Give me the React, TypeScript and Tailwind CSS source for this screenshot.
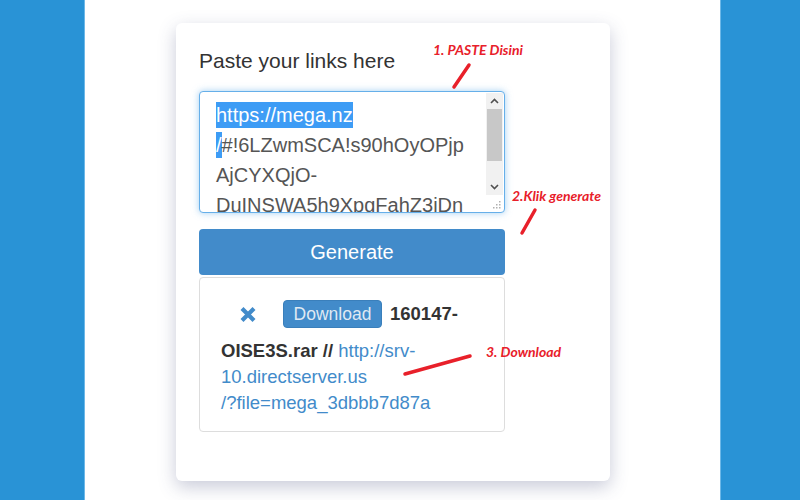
import React from "react";

const Scrollbar = () => (
  <div className="absolute right-[1px] top-[1px] bottom-[1px] w-[17px] flex flex-col">
    <div className="flex-1 bg-[#f1f1f1] flex flex-col">
      <div className="h-[16px] flex items-center justify-center">
        <svg width="9" height="6" viewBox="0 0 9 6">
          <path d="M1 5 L4.5 1.5 L8 5" fill="none" stroke="#505050" strokeWidth="1.6" />
        </svg>
      </div>
      <div className="mx-[1px] h-[52px] bg-[#c8c8c8]" />
      <div className="flex-1" />
      <div className="h-[16px] flex items-center justify-center">
        <svg width="9" height="6" viewBox="0 0 9 6">
          <path d="M1 1 L4.5 4.5 L8 1" fill="none" stroke="#505050" strokeWidth="1.6" />
        </svg>
      </div>
    </div>
    <div className="h-[16px] bg-white flex items-end justify-end pr-[2px] pb-[2px]">
      <svg width="8" height="8" viewBox="0 0 8 8">
        <g fill="#b0b0b0">
          <rect x="6" y="0" width="1.5" height="1.5" />
          <rect x="3" y="3" width="1.5" height="1.5" />
          <rect x="6" y="3" width="1.5" height="1.5" />
          <rect x="0" y="6" width="1.5" height="1.5" />
          <rect x="3" y="6" width="1.5" height="1.5" />
          <rect x="6" y="6" width="1.5" height="1.5" />
        </g>
      </svg>
    </div>
  </div>
);

const noteFont = { fontFamily: 'Lato, "Open Sans", sans-serif' };

export default function App() {
  return (
    <div
      className="relative w-[800px] h-[500px] flex overflow-hidden bg-white text-[#333]"
      style={{ fontFamily: '"Liberation Sans", Arial, sans-serif' }}
    >
      <div className="w-[85px] bg-[#2993d6] border-r border-[#6db8e8]" />
      <div className="flex-1 bg-white pl-[91px] pt-[23px]">
        <div className="w-[434px] h-[458px] bg-white rounded-[6px] shadow-[0_6px_18px_rgba(60,70,120,0.28)] pl-[23px] pt-[26px]">
          <div className="w-[306px]">
            <h1 className="text-[21px] leading-[24px] font-normal text-[#333]">Paste your links here</h1>
            <div className="relative mt-[18px] h-[122px] rounded-[4px] border border-[#66afe9] shadow-[0_0_7px_rgba(102,175,233,0.6)] bg-white overflow-hidden">
              <div className="pl-[16px] pt-[8px] text-[20px] leading-[30px] text-[#555] whitespace-nowrap">
                <div>
                  <span className="bg-[#3d9cf5] text-white py-[2px]">https://mega.nz</span>
                </div>
                <div>
                  <span className="bg-[#3d9cf5] text-white py-[2px]">/</span>#!6LZwmSCA!s90hOyOPjp
                </div>
                <div>AjCYXQjO-</div>
                <div>DuINSWA5h9XpgFahZ3jDn</div>
              </div>
              <Scrollbar />
            </div>
            <button className="mt-[16px] w-full h-[46px] rounded-[4px] bg-[#428bca] text-white text-[20px] leading-[46px] text-center">
              Generate
            </button>
            <div className="mt-[2px] h-[155px] rounded-[4px] border border-[#ddd] pl-[21px] pt-[22px]">
              <div className="flex items-center h-[28px]">
                <svg className="ml-[18px]" width="18" height="17" viewBox="0 0 18 17">
                  <path d="M3 2.5 L15 14.5 M15 2.5 L3 14.5" stroke="#428bca" strokeWidth="4.2" strokeLinecap="butt" />
                </svg>
                <span className="ml-[26px] h-[28px] w-[99px] rounded-[4px] bg-[#428bca] border border-[#3a7fbb] text-[#dfe9f3] text-[17.5px] leading-[26px] text-center">
                  Download
                </span>
                <span className="ml-[8px] font-bold text-[18.5px]">160147-</span>
              </div>
              <div className="mt-[10px] text-[18.5px] leading-[26px]">
                <span className="font-bold">OISE3S.rar //</span>{" "}
                <a className="text-[#428bca]">http://srv-</a>
                <br />
                <a className="text-[#428bca]">10.directserver.us</a>
                <br />
                <a className="text-[#428bca]">/?file=mega_3dbbb7d87a</a>
              </div>
            </div>
          </div>
        </div>
      </div>
      <div className="w-[80px] bg-[#2993d6] border-l border-[#6db8e8]" />

      <svg className="absolute left-0 top-0 pointer-events-none" width="800" height="500">
        <g stroke="#e8202a" strokeWidth="3.5" strokeLinecap="round">
          <line x1="454" y1="87" x2="469" y2="65" />
          <line x1="522" y1="233" x2="535" y2="210" />
          <line x1="405" y1="374" x2="470" y2="356" />
        </g>
      </svg>
      <div
        className="absolute left-[433px] top-[39px] text-[14px] font-bold italic text-[#e8202a] whitespace-nowrap"
        style={noteFont}
      >
        1. PASTE Disini
      </div>
      <div
        className="absolute left-[512px] top-[185px] text-[14px] font-bold italic text-[#e8202a] whitespace-nowrap"
        style={noteFont}
      >
        2.Klik generate
      </div>
      <div
        className="absolute left-[486px] top-[341px] text-[14px] font-bold italic text-[#e8202a] whitespace-nowrap"
        style={noteFont}
      >
        3. Download
      </div>
    </div>
  );
}
